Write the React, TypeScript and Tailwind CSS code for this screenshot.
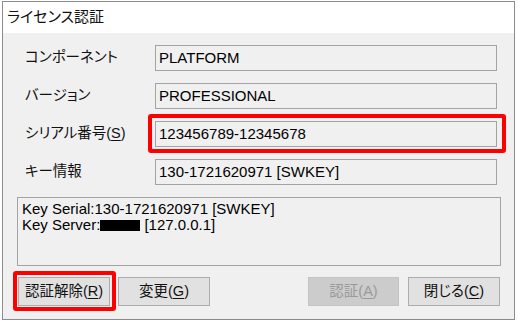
const jp = "font-['Liberation_Sans','Noto_Sans_CJK_JP',sans-serif] [font-feature-settings:'palt']";

const Key = ({ k }: { k: string }) => (
  <span>
    (<span className="underline underline-offset-2">{k}</span>)
  </span>
);

const Field = ({ value }: { value: string }) => (
  <div className="w-[342px] h-[26px] border border-[#a3a3a3] bg-[#f0f0f0] pl-[3px] flex items-center text-[15px] text-black">
    {value}
  </div>
);

const Row = ({ label, children }: { label: React.ReactNode; children: React.ReactNode }) => (
  <div className="flex items-center h-[26px]">
    <div className="w-[130px] text-[14.5px] text-[#111]">{label}</div>
    {children}
  </div>
);

const Button = ({ children, disabled }: { children: React.ReactNode; disabled?: boolean }) => (
  <button
    className={
      disabled
        ? "w-[91px] h-[29px] border border-[#c4c4c4] bg-[#cccccc] text-[#9a9a9a] text-[14.5px] flex items-center justify-center"
        : "w-[92px] h-[29px] border border-[#adadad] bg-[#e1e1e1] text-[#111] text-[14.5px] flex items-center justify-center"
    }
  >
    {children}
  </button>
);

const Mark = ({ className }: { className: string }) => (
  <span className={"absolute border-4 border-[#ff0000] rounded-[3px] pointer-events-none " + className} />
);

export default function App() {
  return (
    <div className={"w-[518px] h-[324px] bg-white overflow-hidden pl-[2px] pt-[1px] " + jp}>
      <div className="w-[513px] h-[319px] border border-[#8c8c8c] flex flex-col">
        <div className="h-[31px] bg-white flex items-center pl-[4px] text-[15px] text-[#111]">
          ライセンス認証
        </div>

        <div className="flex-1 bg-[#f0f0f0] flex flex-col pt-[12px]">
          <div className="flex flex-col gap-[12px] pl-[22px]">
            <Row label="コンポーネント">
              <Field value="PLATFORM" />
            </Row>
            <Row label="バージョン">
              <Field value="PROFESSIONAL" />
            </Row>
            <Row label={<>シリアル番号<Key k="S" /></>}>
              <div className="relative">
                <Field value="123456789-12345678" />
                <Mark className="-left-[7px] -right-[9px] -top-[7px] -bottom-[6px]" />
              </div>
            </Row>
            <Row label="キー情報">
              <Field value="130-1721620971 [SWKEY]" />
            </Row>
          </div>

          <div className="ml-[14px] mt-[12px] w-[484px] h-[69px] border border-[#a3a3a3] bg-[#f0f0f0] pl-[4px] pt-[3px] text-[15px] leading-[16px] text-black">
            <div>Key Serial:130-1721620971 [SWKEY]</div>
            <div className="flex items-center">
              <span>Key Server:</span>
              <span className="inline-block w-[40px] h-[11px] bg-black mr-[4px]" />
              <span>[127.0.0.1]</span>
            </div>
          </div>

          <div className="mt-[11px] pl-[15px] pr-[14px] flex justify-between">
            <div className="flex gap-[8px]">
              <div className="relative">
                <Button>認証解除<Key k="R" /></Button>
                <Mark className="-left-[5px] -right-[6px] -top-[6px] -bottom-[5px]" />
              </div>
              <Button>変更<Key k="G" /></Button>
            </div>
            <div className="flex gap-[9px]">
              <Button disabled>認証<Key k="A" /></Button>
              <Button>閉じる<Key k="C" /></Button>
            </div>
          </div>
        </div>
      </div>
    </div>
  );
}
